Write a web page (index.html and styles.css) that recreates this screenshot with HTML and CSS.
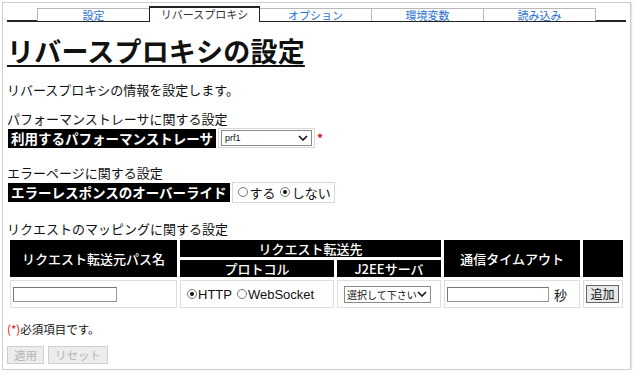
FILE: index.html
```html
<!DOCTYPE html>
<html lang="ja">
<head>
<meta charset="utf-8">
<link rel="stylesheet" href="styles.css">
</head>
<body>
<div class="frame">
  <div class="tabs">
    <div class="tab">設定</div>
    <div class="tab active">リバースプロキシ</div>
    <div class="tab">オプション</div>
    <div class="tab">環境変数</div>
    <div class="tab">読み込み</div>
  </div>

  <h1 class="title">リバースプロキシの設定</h1>
  <p class="desc">リバースプロキシの情報を設定します。</p>

  <div class="sec-title">パフォーマンストレーサに関する設定</div>
  <div class="field">
    <div class="label">利用するパフォーマンストレーサ</div>
    <div class="value">
      <div class="select select-prf"><span>prf1</span><svg class="chev" viewBox="0 0 10 6" width="10" height="6"><path d="M1 1 L5 5 L9 1" fill="none" stroke="#111" stroke-width="1.6"/></svg></div>
    </div>
    <span class="req">*</span>
  </div>

  <div class="sec-title sec2">エラーページに関する設定</div>
  <div class="field">
    <div class="label">エラーレスポンスのオーバーライド</div>
    <div class="value radios">
      <span class="radio"></span><span>する</span>
      <span class="radio on gap"></span><span>しない</span>
    </div>
  </div>

  <div class="sec-title sec3">リクエストのマッピングに関する設定</div>
  <table class="map">
    <colgroup>
      <col class="c1"><col class="c2"><col class="c3"><col class="c4"><col class="c5">
    </colgroup>
    <tr class="h1r">
      <th rowspan="2">リクエスト転送元パス名</th>
      <th colspan="2">リクエスト転送先</th>
      <th rowspan="2">通信タイムアウト</th>
      <th rowspan="2"></th>
    </tr>
    <tr class="h2r">
      <th>プロトコル</th>
      <th>J2EEサーバ</th>
    </tr>
    <tr class="data">
      <td><div class="input input-path"></div></td>
      <td><div class="radios proto"><span class="radio on"></span><span>HTTP</span><span class="radio gap"></span><span>WebSocket</span></div></td>
      <td><div class="select select-srv"><span>選択して下さい</span><svg class="chev" viewBox="0 0 10 6" width="10" height="6"><path d="M1 1 L5 5 L9 1" fill="none" stroke="#111" stroke-width="1.6"/></svg></div></td>
      <td><div class="timeout"><div class="input input-time"></div><span class="sec">秒</span></div></td>
      <td><div class="btn-add">追加</div></td>
    </tr>
  </table>

  <p class="note"><span class="red">(*)</span>必須項目です。</p>
  <div class="actions">
    <div class="btn disabled">適用</div>
    <div class="btn disabled">リセット</div>
  </div>
</div>
</body>
</html>
```
FILE: styles.css
```css
html, body {
  margin: 0;
  padding: 0;
  background: #fff;
}
body {
  font-family: "Noto Sans CJK JP", "Noto Sans", sans-serif;
  color: #111;
  font-size: 13px;
}
.frame {
  margin: 2px 0 0 2px;
  width: 629px;
  height: 368px;
  border: 1px solid #cfcfcf;
  box-shadow: 1px 1px 1px #e4e4e4;
  padding: 5px 0 0 4px;
  box-sizing: border-box;
}
.tabs {
  display: flex;
  width: 619px;
  height: 14px;
  padding-left: 30px;
  box-sizing: border-box;
  border-bottom: 2px solid #222;
}
.tab {
  width: 111px;
  height: 12px;
  border: 1px solid #b8b8b8;
  border-bottom: none;
  box-sizing: content-box;
  margin-right: -1px;
  font-size: 11px;
  line-height: 13px;
  text-align: center;
  color: #2a6fd0;
  background: #fff;
}
.tab.active {
  width: 109px;
  color: #333;
  border-top: 2px solid #222;
  border-left: 1px solid #222;
  border-right: 1px solid #222;
  height: 13px;
  margin-top: -2px;
  margin-bottom: -2px;
  padding-bottom: 1px;
  position: relative;
  z-index: 1;
}
.title {
  margin: 13px 0 0 0;
  font-size: 27px;
  line-height: 32px;
  font-weight: bold;
  text-decoration: underline;
  text-underline-offset: 3px;
  text-decoration-thickness: 2px;
  letter-spacing: 0.2px;
}
.desc {
  margin: 15px 0 0 0;
  line-height: 16px;
  font-size: 13px;
}
.sec-title {
  margin-top: 13px;
  line-height: 16px;
  font-size: 13px;
}
.sec2 { margin-top: 17px; }
.sec3 { margin-top: 19px; }
.field {
  display: flex;
  align-items: center;
  margin-top: 1px;
  margin-left: 1px;
  height: 20px;
}
.label {
  background: #000;
  color: #fff;
  font-weight: bold;
  font-size: 13.5px;
  line-height: 19px;
  height: 19px;
  padding: 0 3px;
}
.value {
  margin-left: 2px;
  border: 1px solid #d8d8d8;
  height: 18px;
  display: flex;
  align-items: center;
  padding: 0 2px;
}
.select {
  display: flex;
  align-items: center;
  justify-content: space-between;
  border: 1px solid #8a8a8a;
  background: #fff;
  box-sizing: border-box;
  height: 16px;
  padding: 0 3px 0 3px;
  white-space: nowrap;
  overflow: hidden;
}
.select-prf {
  width: 91px;
  font-family: "Liberation Sans", Arial, sans-serif;
  font-size: 9px;
}
.chev { flex: none; }
.req {
  color: #e01010;
  font-size: 12px;
  font-weight: bold;
  margin-left: 2px;
  line-height: 12px;
}
.radios {
  gap: 0;
  font-size: 13px;
}
.value.radios {
  padding: 0 3px 0 3px;
  height: 19px;
}
.radio {
  display: inline-block;
  width: 10px;
  height: 10px;
  border: 1px solid #777;
  border-radius: 50%;
  box-sizing: border-box;
  margin: 0 2px 0 2px;
  position: relative;
  flex: none;
}
.radio.gap { margin-left: 4px; }
.radio.on::after {
  content: "";
  position: absolute;
  left: 2px;
  top: 2px;
  width: 4px;
  height: 4px;
  border-radius: 50%;
  background: #111;
}
.map {
  margin-top: 0;
  width: 618px;
  border-collapse: separate;
  border-spacing: 3px;
  margin-left: 0;
  table-layout: fixed;
}
.c1 { width: 167px; }
.c2 { width: 154px; }
.c3 { width: 104px; }
.c4 { width: 136px; }
.c5 { width: 40px; }
.map th {
  background: #000;
  color: #fff;
  font-weight: 500;
  font-size: 13px;
  padding: 0;
  text-align: center;
}
.h1r th { height: 17px; line-height: 17px; }
.h2r th { height: 17px; line-height: 17px; }
.data td {
  border: 1px solid #dedede;
  height: 26px;
  padding: 0 0 0 2px;
  vertical-align: middle;
}
.input {
  border: 1px solid #999;
  border-top-color: #777;
  border-left-color: #777;
  height: 15px;
  box-sizing: border-box;
  background: #fff;
}
.input-path { width: 104px; }
.proto {
  display: flex;
  align-items: center;
  font-family: "Liberation Sans", Arial, sans-serif;
  font-size: 13px;
  padding-left: 2px;
  white-space: nowrap;
}
.proto .radio { margin: 0 1px 0 2px; }
.proto .radio.gap { margin-left: 5px; }
.select-srv {
  width: 87px;
  font-size: 10px;
  margin-left: 4px;
  height: 17px;
  padding-left: 2px;
}
.timeout {
  display: flex;
  align-items: center;
}
.input-time { width: 102px; }
.sec { margin-left: 5px; font-size: 13px; }
.btn-add {
  width: 33px;
  height: 18px;
  box-sizing: border-box;
  border: 1px solid #666;
  background: #e8e8e8;
  font-size: 12px;
  line-height: 16px;
  text-align: center;
  margin-left: 0;
}
.note {
  margin: 10px 0 0 0;
  font-size: 11.5px;
  line-height: 16px;
}
.red { color: #e01010; }
.actions {
  display: flex;
  gap: 4px;
  margin-top: 9px;
}
.btn {
  height: 18px;
  box-sizing: border-box;
  border: 1px solid #cfcfcf;
  background: #ececec;
  color: #b5b5b5;
  font-size: 11.5px;
  line-height: 16px;
  padding: 0 6px;
}
```
